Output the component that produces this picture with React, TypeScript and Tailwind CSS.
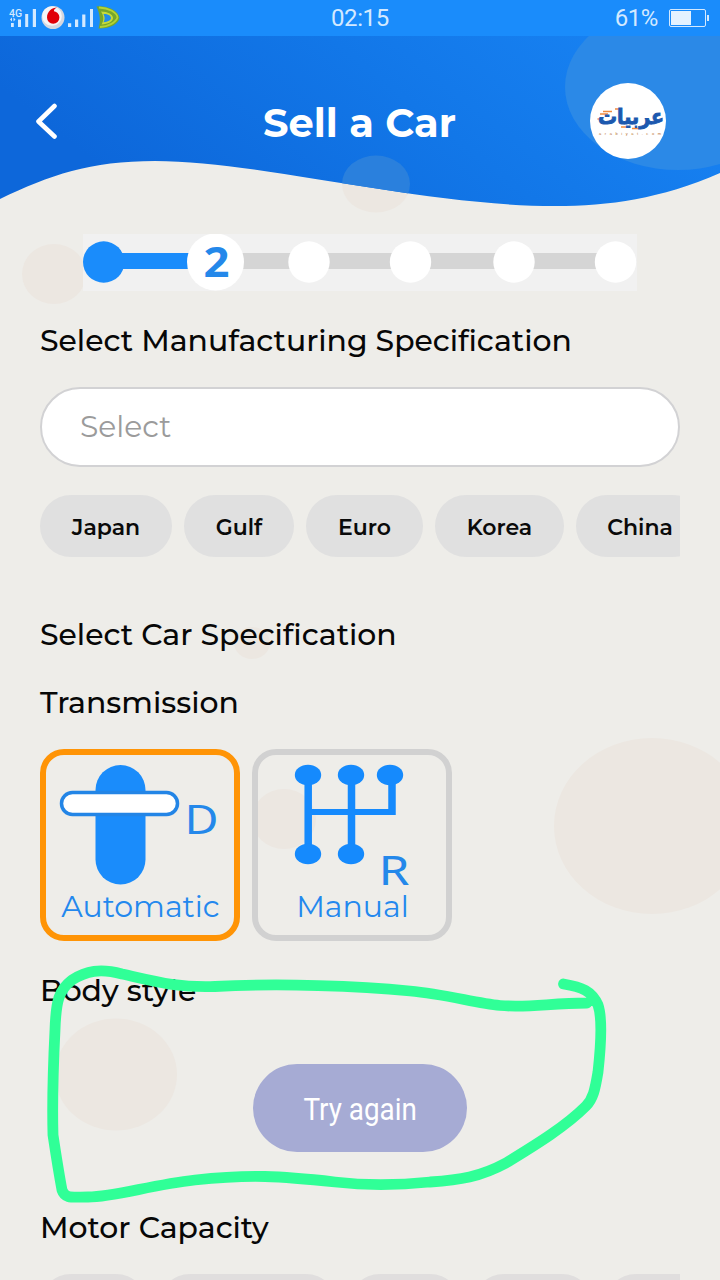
import React from "react";

const specs = [
  { label: "Japan", box: "w-[132px]" },
  { label: "Gulf", box: "w-[110px]" },
  { label: "Euro", box: "w-[117px]" },
  { label: "Korea", box: "w-[129px]" },
  { label: "China", box: "w-[128px]" },
];

const capacities = ["w-[107px]", "w-[178px]", "w-[112px]", "w-[120px]", "w-[120px]"];

function Backdrop() {
  return (
    <svg className="absolute inset-0 h-[1280px] w-[720px]" viewBox="0 0 720 1280" fill="#ece7e1">
      <ellipse cx="54" cy="274" rx="32" ry="30" />
      <ellipse cx="252" cy="643" rx="18" ry="16" />
      <ellipse cx="284" cy="819" rx="32" ry="30" />
      <ellipse cx="652" cy="826" rx="98" ry="88" />
      <ellipse cx="116" cy="1074.500" rx="61" ry="56" />
      <ellipse cx="376" cy="184" rx="34" ry="28.500" />
      <defs>
        <linearGradient id="sky" x1="0" y1="0.3" x2="1" y2="0">
          <stop offset="0" stopColor="#0d67da" />
          <stop offset="0.5" stopColor="#1277e8" />
          <stop offset="1" stopColor="#1985f5" />
        </linearGradient>
        <clipPath id="wave">
          <path d="M0 36H720V173C660 199 610 206 555 206C420 206 260 161 155 161C90 161 50 175 0 199Z" />
        </clipPath>
      </defs>
      <g clipPath="url(#wave)">
        <rect y="36" width="720" height="172" fill="url(#sky)" />
        <ellipse cx="376" cy="184" rx="34" ry="28.500" fill="#2a80dd" />
        <ellipse cx="678" cy="87" rx="113" ry="83" fill="#2b89e7" />
      </g>
    </svg>
  );
}

function SignalIcons() {
  return (
    <svg className="h-9 w-[124px]" viewBox="0 0 124 36">
      <text x="9" y="17" fontFamily="Roboto" fontWeight="500" fontSize="10.500" fill="#d3e9ff">4G</text>
      <g fill="#d3e9ff">
        <path d="M11 23h2.800v4H11zM18 19.500h3v7.500H18zM25.200 14h3v13h-3zM32.800 9h3.200v18h-3.200z" />
        <path d="M10 19.500l2-2v4zM15.500 19.500l-2-2v4z" />
        <path d="M68 23.200h3.200V27H68zM75 19.500h3.200V27H75zM82.200 14.500h3.200V27h-3.200zM90 9h3v18h-3z" />
      </g>
      <circle cx="53" cy="17.500" r="11.500" fill="#d5d7df" />
      <circle cx="52" cy="16" r="9.800" fill="#f5f5f7" />
      <path d="M57 7.500c-5 0-10 4-10 10a6.200 6.200 0 0 0 12.400 0c0-3.500-2.500-5.500-5.500-6.200 0-1.800 1.200-3 3.100-3.800z" fill="#e00008" />
      <path d="M96.500 6.500C107 5 119 11 119.500 18C119 24 109 29 98.500 28.500C101 21 100 14 96.500 6.500Z" fill="#76a62c" />
      <path d="M99 7.500C109 8 117 12.500 117.500 17.500C115.500 23 108 26.500 100 27" fill="none" stroke="#b5d334" strokeWidth="1.800" />
      <path d="M101 11.500c7 0 12 3 12 6.500s-5 6-11.500 6.500c2.500-4 2.500-8.500-.5-13z" fill="#c6db3a" />
      <path d="M103.500 14c5 0 7.500 2 7.500 4s-3 4-7.500 4.300c1.500-3 1.500-5.300 0-8.300z" fill="#218ce8" />
    </svg>
  );
}

function StatusBar() {
  return (
    <div className="relative flex h-9 items-center justify-between bg-[#1a8cfb] text-[#d3e9ff]">
      <SignalIcons />
      <span className="absolute left-[331px] font-[Roboto] text-[24px] leading-[37px] tracking-[-0.4px]">02:15</span>
      <div className="flex items-center gap-[11px] pr-[11px]">
        <span className="font-[Roboto] text-[24px] leading-[36px] tracking-[-0.4px]">61%</span>
        <div className="flex items-center gap-px">
          <div className="h-[18px] w-[37px] rounded-[2px] border border-[#d3e9ff] p-px">
            <div className="h-full w-[20px] bg-[#e4f2ff]" />
          </div>
          <div className="h-1.5 w-0.5 bg-[#d3e9ff]" />
        </div>
      </div>
    </div>
  );
}

function Brand() {
  return (
    <svg className="h-[76px] w-[76px]" viewBox="0 0 76 76">
      <circle cx="38" cy="38" r="38" fill="#fff" />
      <path d="M13 28.500h9M10 31h8M25 26h5M7.500 36h4M31 44h9M42 45.500h7" stroke="#f08a3c" strokeWidth="1.500" />
      <text x="8" y="40.500" textLength="66" lengthAdjust="spacingAndGlyphs" fontFamily="DejaVu Sans" fontWeight="700" fontSize="21" fill="#1c58ae" stroke="#1c58ae" strokeWidth="0.900">عربيات</text>
      <text x="9" y="52" textLength="62" fontFamily="Liberation Sans" fontSize="4" fill="#b87333">arabiyat.com</text>
    </svg>
  );
}

function Header() {
  return (
    <header className="relative flex h-[170px] items-start justify-between pt-[47px] pr-[54px] pl-[35px]">
      <svg className="mt-[19px] h-[40px] w-[22px]" viewBox="0 0 22 40" fill="none" stroke="#fff" strokeWidth="4.600" strokeLinecap="round" strokeLinejoin="round">
        <path d="M19.500 4L3.500 19.500L19.500 34.500" />
      </svg>
      <h1 className="ml-[72px] pt-[14px] font-[Montserrat,Inter,sans-serif] text-[40px] leading-[52px] font-bold whitespace-nowrap text-white">Sell a Car</h1>
      <Brand />
    </header>
  );
}

function Progress() {
  return (
    <svg className="relative mt-[28px] ml-[83px] h-[57px] w-[554px]" viewBox="0 0 554 57">
      <rect width="554" height="57" fill="#f1f1f1" />
      <path d="M130 27H530" stroke="#d5d5d5" strokeWidth="16" />
      <path d="M20 27H120" stroke="#1a8cfb" strokeWidth="16" />
      <circle cx="20.700" cy="28" r="20.700" fill="#1a8cfb" />
      <g fill="#fff">
        <circle cx="132.500" cy="28" r="28.500" />
        <circle cx="226" cy="28" r="20.700" />
        <circle cx="327.500" cy="28" r="20.700" />
        <circle cx="431" cy="28" r="20.700" />
        <circle cx="532.500" cy="28" r="20.700" />
      </g>
      <text x="120.500" y="43" textLength="26" lengthAdjust="spacingAndGlyphs" fontFamily="'Noto Sans', 'Open Sans'" fontWeight="700" fontSize="41" fill="#2488ea">2</text>
    </svg>
  );
}

const heading = "font-[Montserrat,Inter,sans-serif] text-[29.9px] leading-[40px] font-medium whitespace-nowrap text-[#070707]";
const gearLabel = "absolute inset-x-0 top-[136px] pl-px text-center font-[Montserrat,Inter,sans-serif] text-[30px] leading-[32px] font-normal text-[#2388ee]";

function AutomaticCard() {
  return (
    <button className="relative h-[192px] w-[200px] rounded-[24px] border-6 border-[#ff9406]">
      <svg className="absolute -top-1.5 -left-1.5 h-[192px] w-[200px]" viewBox="0 0 200 192">
        <rect x="55.500" y="16" width="50" height="119.500" rx="25" fill="#1a8cfb" />
        <rect x="21.500" y="43.500" width="116" height="22" rx="11" fill="#fff" stroke="#2385e6" strokeWidth="3.500" />
        <text x="144.500" y="85" textLength="34" lengthAdjust="spacingAndGlyphs" fontFamily="'Noto Sans', 'Open Sans'" fontSize="40" fill="#2488ea">D</text>
      </svg>
      <span className={gearLabel}>Automatic</span>
    </button>
  );
}

function ManualCard() {
  return (
    <button className="relative h-[192px] w-[200px] rounded-[24px] border-6 border-[#d1d1d1]">
      <svg className="absolute -top-1.5 -left-1.5 h-[192px] w-[200px]" viewBox="0 0 200 192">
        <g fill="none" stroke="#158afd">
          <path d="M56.200 26V105M99.500 26V105" strokeWidth="7.500" />
          <path d="M56 63H143" strokeWidth="6" />
          <path d="M140 26V66" strokeWidth="7.500" />
        </g>
        <g fill="#158afd">
          <ellipse cx="56" cy="26" rx="13.200" ry="10.200" />
          <ellipse cx="99" cy="26" rx="13.200" ry="10.200" />
          <ellipse cx="138" cy="26" rx="13.200" ry="10.200" />
          <ellipse cx="56" cy="105" rx="13.200" ry="10.200" />
          <ellipse cx="99" cy="105" rx="13.200" ry="10.200" />
        </g>
        <text x="126.500" y="136" textLength="31" lengthAdjust="spacingAndGlyphs" fontFamily="'Noto Sans', 'Open Sans'" fontSize="40" fill="#2488ea">R</text>
      </svg>
      <span className={gearLabel}>Manual</span>
    </button>
  );
}

function Scribble() {
  return (
    <svg className="pointer-events-none absolute inset-0 h-[1280px] w-[720px]" viewBox="0 0 720 1280" fill="none" stroke="#30ff97" strokeWidth="10.800" strokeLinecap="round" strokeLinejoin="round">
      <path d="M563.500 984C582 987 592 991 598 1005C602.500 1018 601 1045 598 1072C595 1090 593 1099 586 1106C564 1128 532 1147 506 1163C480 1177 460 1180 430 1182C400 1185 370 1186 335 1182C280 1176 250 1174 195 1180C150 1185 115 1197 88 1197C72 1197 65 1199 62 1190C59 1174 56 1155 53 1135C52 1100 53 1070 55 1030C56 1000 59 990 72 980C86 971 100 968 122 974C150 980 175 988 215 986.500C280 983 360 986 410 991C445 994 475 1003 500 1005.500C530 1008 550 1003 587 1003" />
    </svg>
  );
}

export default function App() {
  return (
    <div className="relative h-[1280px] w-[720px] overflow-hidden bg-[#eeede9]">
      <Backdrop />
      <StatusBar />
      <Header />
      <Progress />
      <main className="relative flex flex-col px-10">
        <h2 className={heading + " mt-[30px]"}>Select Manufacturing Specification</h2>
        <div className="mt-[26px] flex h-[80px] items-center rounded-full border-2 border-[#d2d2d4] bg-white px-[38px] pb-0.5 font-[Montserrat,Inter,sans-serif] text-[29.8px] text-[#9b9b9b]">Select</div>
        <div className="mt-[28px] flex gap-3 overflow-hidden">
          {specs.map((s) => (
            <button key={s.label} className={s.box + " h-[62px] shrink-0 rounded-full bg-[#e0e0e0] pt-[3px] font-[Montserrat,Inter,sans-serif] text-[22px] font-semibold text-[#0a0a0a]"}>
              {s.label}
            </button>
          ))}
        </div>
        <h2 className={heading + " mt-[58px]"}>Select Car Specification</h2>
        <h3 className={heading + " mt-[28px]"}>Transmission</h3>
        <div className="mt-[26px] flex gap-3">
          <AutomaticCard />
          <ManualCard />
        </div>
        <h3 className={heading + " mt-[30px]"}>Body style</h3>
        <button className="mt-[53px] h-[88px] w-[214px] self-center rounded-full bg-[#a6abd4] pt-0.5 font-[Roboto] text-[32px] text-white">
          <span className="inline-block scale-x-[0.87] whitespace-nowrap">Try again</span>
        </button>
        <h3 className={heading + " mt-[56px]"}>Motor Capacity</h3>
        <div className="mt-[26px] flex gap-3 overflow-hidden">
          {capacities.map((w, i) => (
            <div key={i} className={w + " h-[62px] shrink-0 rounded-full bg-[#e0dede]"} />
          ))}
        </div>
      </main>
      <Scribble />
    </div>
  );
}
